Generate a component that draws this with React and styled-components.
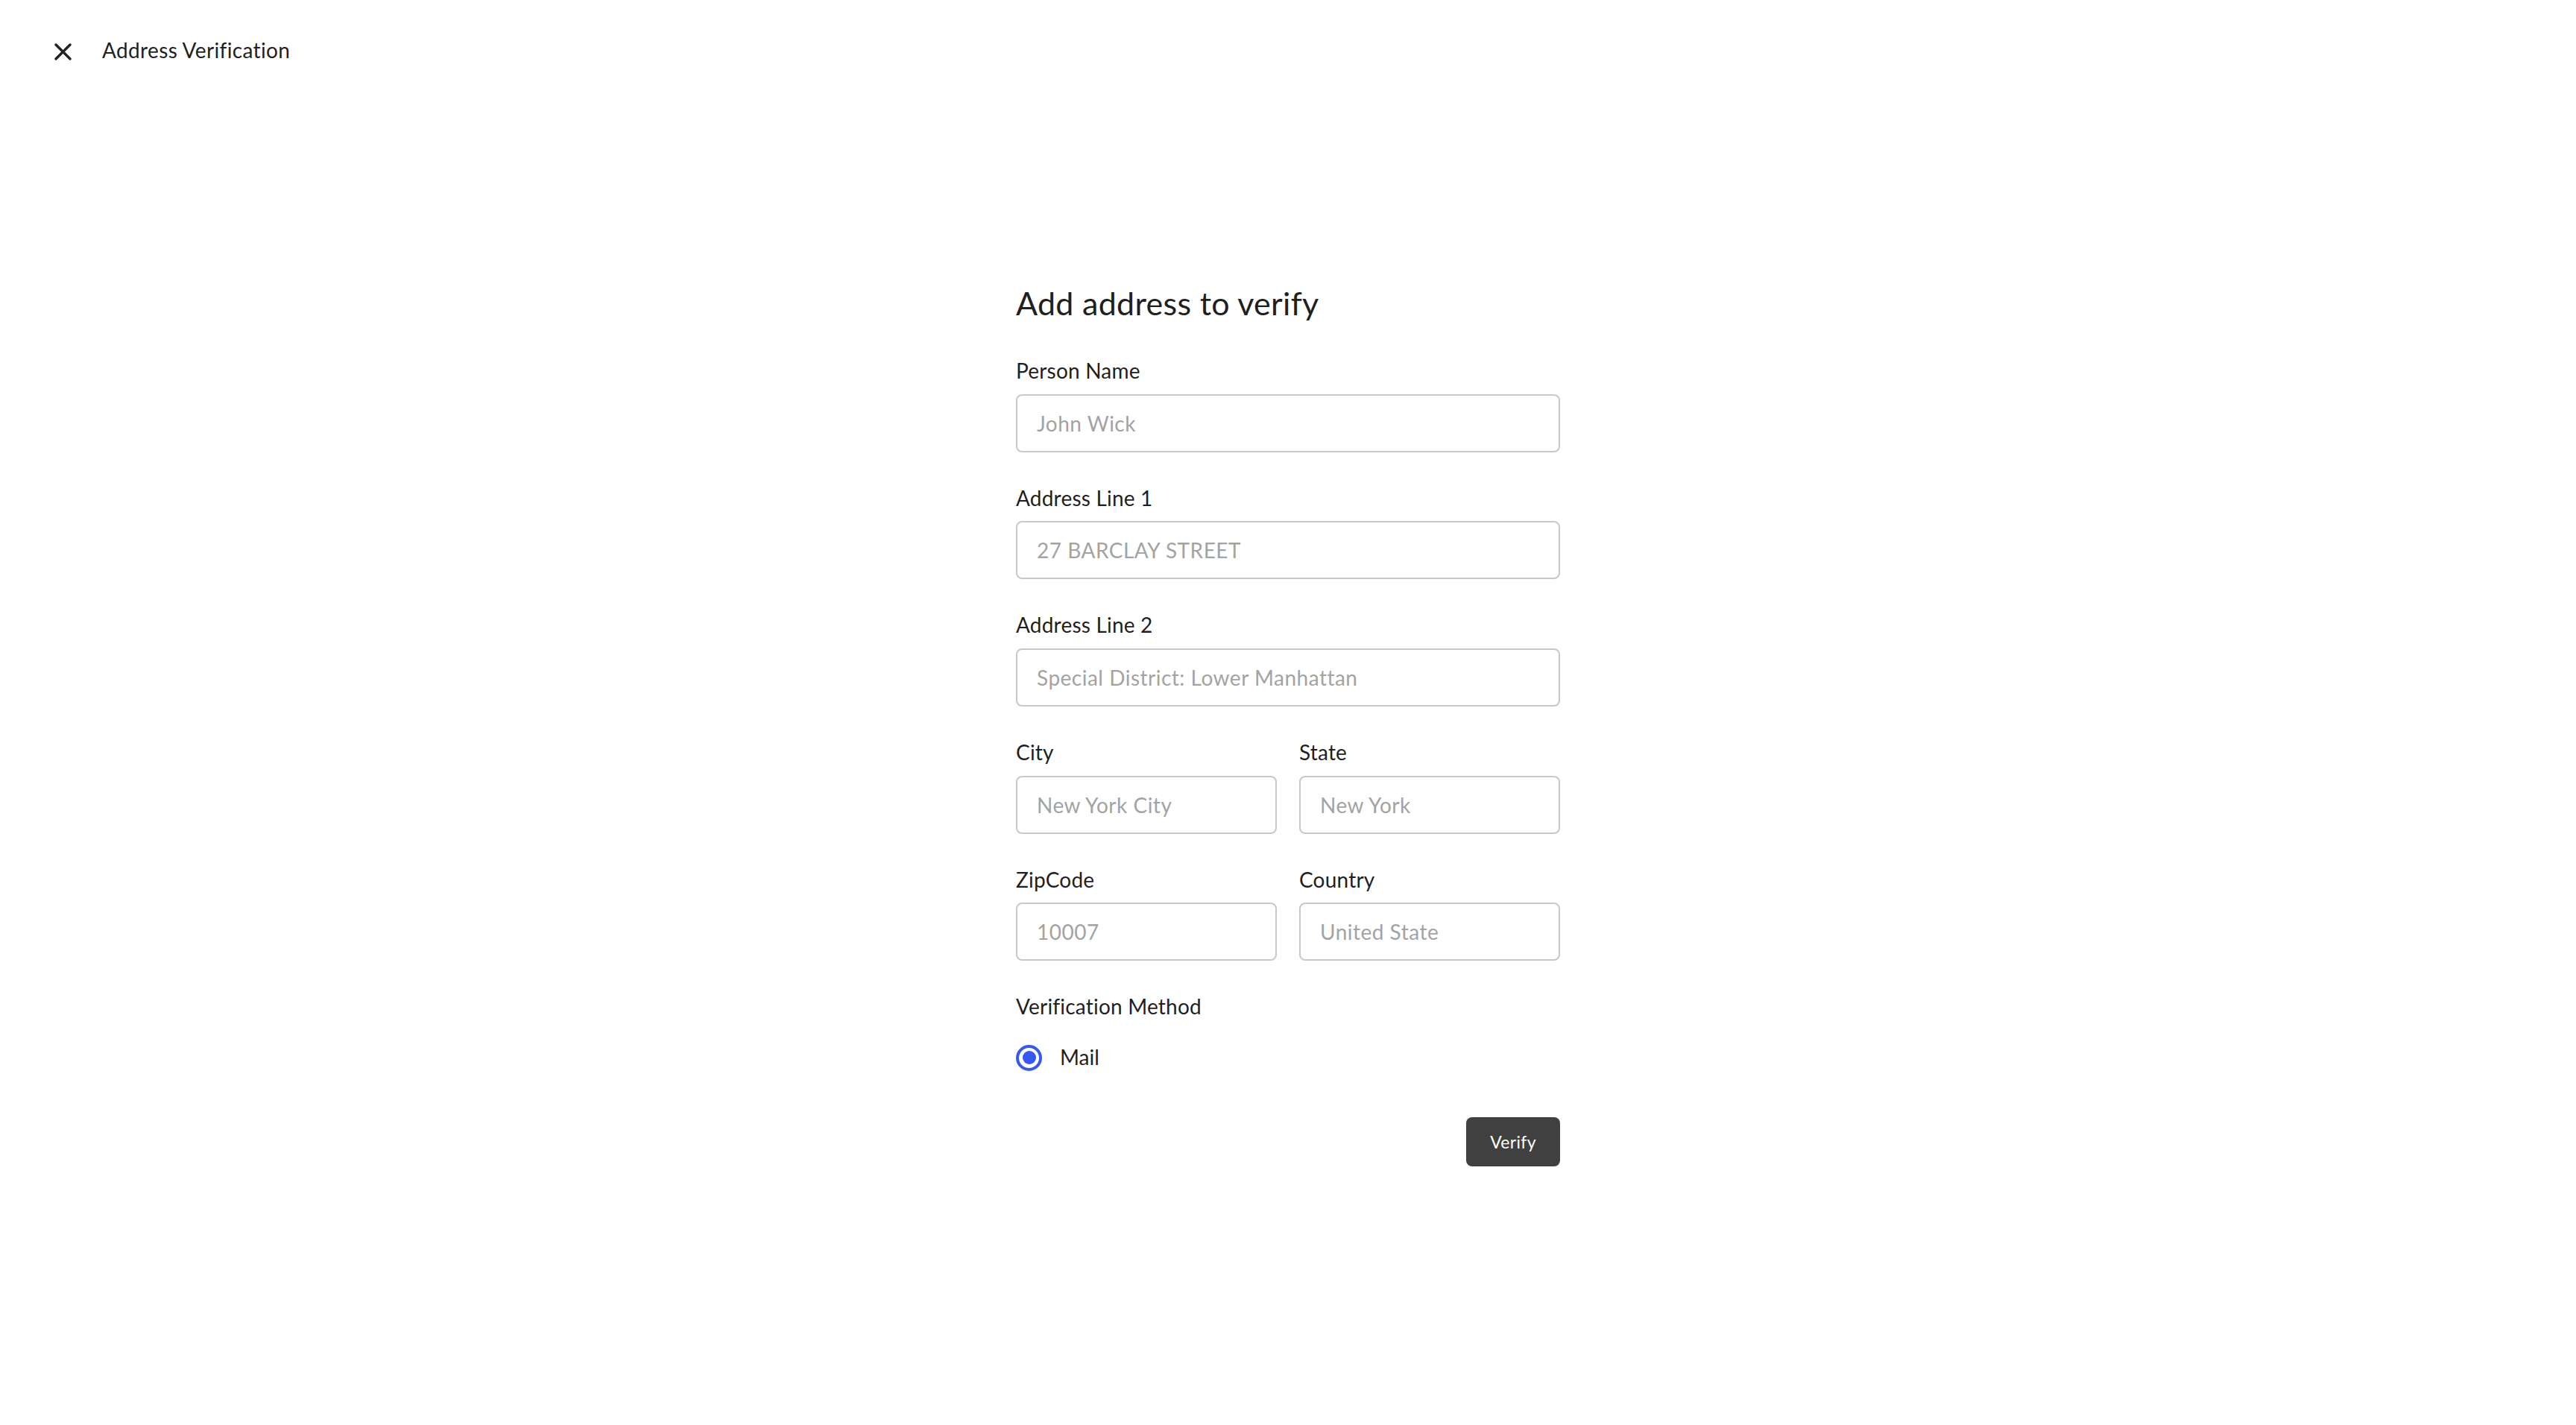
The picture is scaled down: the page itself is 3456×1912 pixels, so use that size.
import React from "react";
import styled, { createGlobalStyle } from "styled-components";

const GlobalStyle = createGlobalStyle`
  html, body {
    margin: 0;
    padding: 0;
    background: #ffffff;
  }
  body {
    font-family: "Lato", "Liberation Sans", sans-serif;
    color: #1f1f1f;
  }
  * { box-sizing: border-box; }
`;

const Page = styled.div`
  min-height: 1912px;
  background: #ffffff;
`;

const Header = styled.header`
  display: flex;
  align-items: center;
  gap: 41px;
  padding: 51px 0 0 73px;
`;

const CloseButton = styled.button`
  display: flex;
  align-items: center;
  justify-content: center;
  width: 23px;
  height: 23px;
  margin-top: 3px;
  padding: 0;
  border: none;
  background: none;
  cursor: pointer;
  color: #222222;
`;

const Title = styled.h1`
  margin: 0;
  font-family: "Lato", "Liberation Sans", sans-serif;
  font-size: 28px;
  line-height: 1.2;
  font-weight: 400;
  letter-spacing: 0.35px;
  color: #1f1f1f;
`;

const Form = styled.form`
  width: 730px;
  margin: 296px auto 0;
  display: flex;
  flex-direction: column;
`;

const Heading = styled.h2`
  margin: 0 0 48px;
  font-family: "Lato", "Liberation Sans", sans-serif;
  font-size: 43px;
  line-height: 1.2;
  font-weight: 400;
  letter-spacing: 0.3px;
  color: #1f1f1f;
`;

const Fields = styled.div`
  display: flex;
  flex-direction: column;
  gap: 44px;
`;

const Row = styled.div`
  display: grid;
  grid-template-columns: 1fr 1fr;
  column-gap: 30px;
`;

const Field = styled.div`
  display: flex;
  flex-direction: column;
  gap: ${(p) => p.$gap || 15}px;
`;

const Label = styled.label`
  font-family: "Lato", "Liberation Sans", sans-serif;
  font-size: 28px;
  line-height: 1.2;
  letter-spacing: 0.2px;
  color: #1f1f1f;
  margin-top: 1px;
`;

const Input = styled.input`
  width: 100%;
  height: 78px;
  padding: 0 26px;
  border: 2px solid #c8c8c8;
  border-radius: 8px;
  background: #ffffff;
  font-family: "Lato", "Liberation Sans", sans-serif;
  font-size: 28px;
  letter-spacing: 0.5px;
  color: #1f1f1f;
  outline: none;
  margin-top: -1px;
  &::placeholder {
    color: #a3a3a3;
  }
`;

const RadioOption = styled.label`
  display: flex;
  align-items: center;
  gap: 24px;
  margin-top: -2px;
  font-family: "Lato", "Liberation Sans", sans-serif;
  font-size: 28px;
  line-height: 1.2;
  color: #1f1f1f;
  cursor: pointer;
`;

const RadioCircle = styled.span`
  width: 35px;
  height: 35px;
  border-radius: 50%;
  border: 4px solid #3558f5;
  display: flex;
  align-items: center;
  justify-content: center;
  flex-shrink: 0;
  &::after {
    content: "";
    width: ${(p) => (p.$checked ? "18px" : "0")};
    height: ${(p) => (p.$checked ? "18px" : "0")};
    border-radius: 50%;
    background: #3558f5;
  }
`;

const Actions = styled.div`
  display: flex;
  justify-content: flex-end;
  margin-top: 62px;
`;

const SubmitButton = styled.button`
  width: 126px;
  height: 66px;
  border: none;
  border-radius: 8px;
  background: #404040;
  color: #ffffff;
  font-family: "Lato", "Liberation Sans", sans-serif;
  font-size: 23px;
  letter-spacing: 0.3px;
  cursor: pointer;
`;

function TextField({ label, placeholder }) {
  return (
    <Field>
      <Label>{label}</Label>
      <Input placeholder={placeholder} />
    </Field>
  );
}

export default function App() {
  return (
    <Page>
      <GlobalStyle />
      <Header>
        <CloseButton type="button" aria-label="Close">
          <svg width="23" height="23" viewBox="0 0 23 23" fill="none">
            <path
              d="M2 2 L21 21 M21 2 L2 21"
              stroke="currentColor"
              strokeWidth="3.4"
              strokeLinecap="round"
            />
          </svg>
        </CloseButton>
        <Title>Address Verification</Title>
      </Header>
      <Form onSubmit={(e) => e.preventDefault()}>
        <Heading>Add address to verify</Heading>
        <Fields>
          <TextField label="Person Name" placeholder="John Wick" />
          <TextField label="Address Line 1" placeholder="27 BARCLAY STREET" />
          <TextField
            label="Address Line 2"
            placeholder="Special District: Lower Manhattan"
          />
          <Row>
            <TextField label="City" placeholder="New York City" />
            <TextField label="State" placeholder="New York" />
          </Row>
          <Row>
            <TextField label="ZipCode" placeholder="10007" />
            <TextField label="Country" placeholder="United State" />
          </Row>
          <Field $gap={36}>
            <Label>Verification Method</Label>
            <RadioOption>
              <RadioCircle $checked />
              Mail
            </RadioOption>
          </Field>
        </Fields>
        <Actions>
          <SubmitButton type="submit">Verify</SubmitButton>
        </Actions>
      </Form>
    </Page>
  );
}
